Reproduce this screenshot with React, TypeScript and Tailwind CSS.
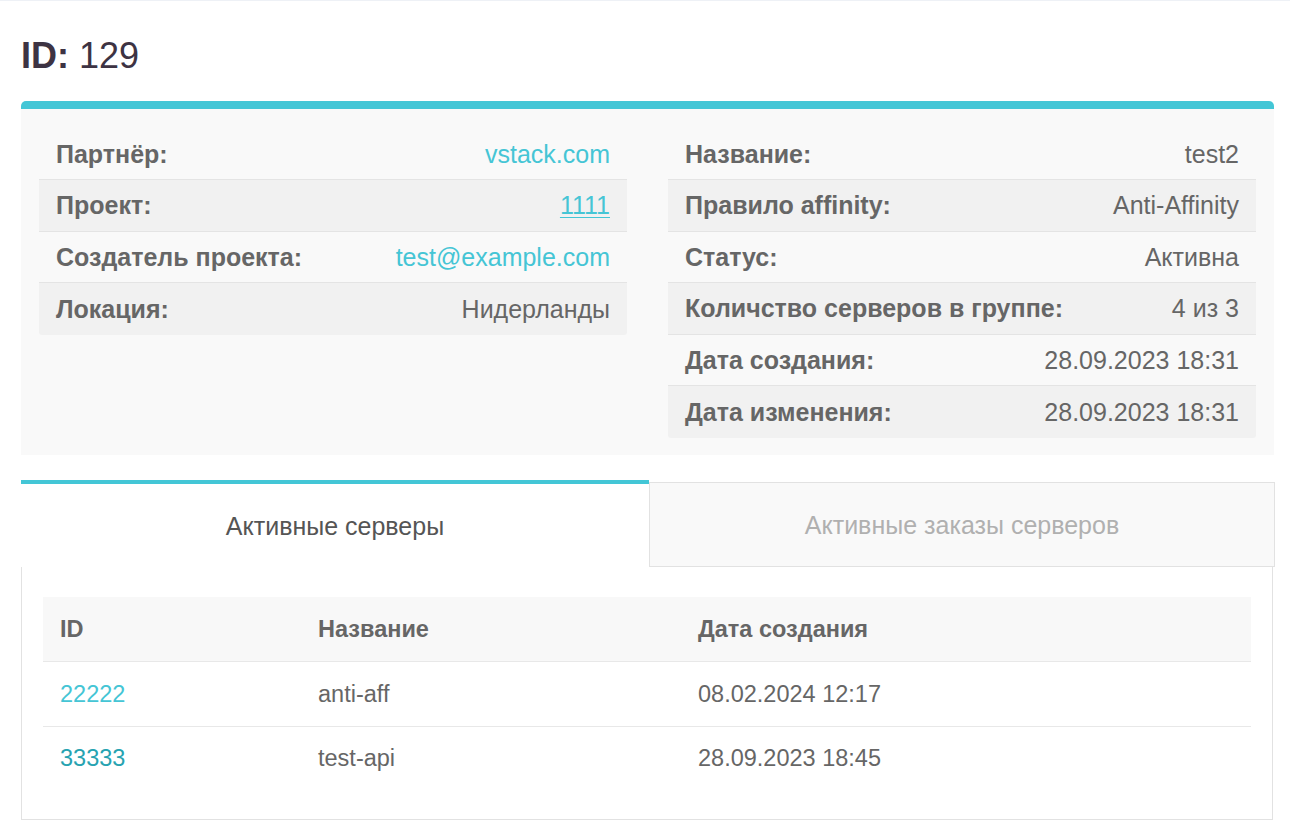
const leftRows: { label: string; value: string; link?: boolean; underline?: boolean }[] = [
  { label: 'Партнёр:', value: 'vstack.com', link: true },
  { label: 'Проект:', value: '1111', link: true, underline: true },
  { label: 'Создатель проекта:', value: 'test@example.com', link: true },
  { label: 'Локация:', value: 'Нидерланды' },
];

const rightRows = [
  { label: 'Название:', value: 'test2' },
  { label: 'Правило affinity:', value: 'Anti-Affinity' },
  { label: 'Статус:', value: 'Активна' },
  { label: 'Количство серверов в группе:', value: '4 из 3' },
  { label: 'Дата создания:', value: '28.09.2023 18:31' },
  { label: 'Дата изменения:', value: '28.09.2023 18:31' },
];

const servers = [
  { id: '22222', name: 'anti-aff', created: '08.02.2024 12:17', visited: false },
  { id: '33333', name: 'test-api', created: '28.09.2023 18:45', visited: true },
];

function InfoTable({
  rows,
}: {
  rows: { label: string; value: string; link?: boolean; underline?: boolean }[];
}) {
  return (
    <div className="flex flex-col">
      {rows.map((row, i) => (
        <div
          key={row.label}
          className={
            i % 2 === 1
              ? 'flex h-[51.5px] items-center justify-between border-t border-[#e4e4e4] bg-[#f1f1f1] px-[17px] last:h-[53px] last:rounded-b-[3px]'
              : i === 0
                ? 'flex h-[50px] items-center justify-between px-[17px]'
                : 'flex h-[51.5px] items-center justify-between border-t border-[#e4e4e4] px-[17px]'
          }
        >
          <span className="font-bold text-[#666]">{row.label}</span>
          <span
            className={
              row.link
                ? row.underline
                  ? 'text-[#45c5d5] underline decoration-1 underline-offset-[3px]'
                  : 'text-[#45c5d5]'
                : 'text-[#666]'
            }
          >
            {row.value}
          </span>
        </div>
      ))}
    </div>
  );
}

export default function App() {
  return (
    <div
      className="min-h-[832px] border-t border-[#eef1f6] bg-white text-[25px] leading-[34px]"
      style={{ fontFamily: '"Liberation Sans", Arial, sans-serif' }}
    >
      <div className="pt-[33px] pr-[16px] pb-[11px] pl-[21px]">
        {/* Header */}
        <h1 className="mb-[23px] text-[36px] leading-[44px] text-[#3d3343]">
          <span className="font-bold">ID:</span> 129
        </h1>

        {/* Info card */}
        <div className="rounded-t-[5px] border-t-[8px] border-[#43c6d6] bg-[#f9f9f9] px-[18px] pt-[20px] pb-[17px]">
          <div className="grid grid-cols-2 items-start gap-[41px]">
            <InfoTable rows={leftRows} />
            <InfoTable rows={rightRows} />
          </div>
        </div>

        {/* Tabs */}
        <div className="mt-[25px] -mr-[1px] flex">
          <div className="flex h-[87px] w-[628px] items-center justify-center border-t-[4px] border-[#43c6d6] bg-white text-[#555]">
            Активные серверы
          </div>
          <div className="mt-[2px] flex h-[85px] flex-1 items-center justify-center border border-[#e2e2e2] bg-[#f9f9f9] text-[#b0b0b0]">
            Активные заказы серверов
          </div>
        </div>

        {/* Tab content */}
        <div className="mr-[1px] border-x border-b border-[#e2e2e2] px-[21px] pt-[30px] pb-[29px]">
          <table className="w-full border-collapse text-left text-[23.5px]">
            <thead>
              <tr className="h-[64px] border-b border-[#e8e8e8] bg-[#f8f8f8] text-[#666]">
                <th className="w-[275px] pl-[17px] font-bold">ID</th>
                <th className="w-[380px] font-bold">Название</th>
                <th className="font-bold">Дата создания</th>
              </tr>
            </thead>
            <tbody>
              {servers.map((s, i) => (
                <tr
                  key={s.id}
                  className={
                    i < servers.length - 1
                      ? 'h-[65px] border-b border-[#e8e8e8] text-[#666]'
                      : 'h-[64px] text-[#666]'
                  }
                >
                  <td className="pl-[17px]">
                    <span className={s.visited ? 'text-[#27a3b1]' : 'text-[#45c5d5]'}>{s.id}</span>
                  </td>
                  <td>{s.name}</td>
                  <td>{s.created}</td>
                </tr>
              ))}
            </tbody>
          </table>
        </div>
      </div>
    </div>
  );
}
